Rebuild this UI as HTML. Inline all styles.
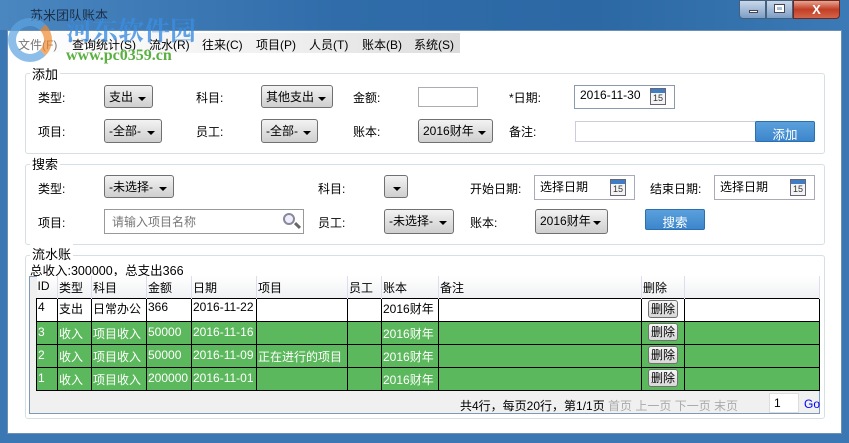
<!DOCTYPE html>
<html><head><meta charset="utf-8"><style>
*{margin:0;padding:0;box-sizing:border-box}
body{width:849px;height:443px;overflow:hidden;font-family:"Liberation Sans","Noto Sans CJK SC",sans-serif;font-size:12px;color:#000;position:relative;background:#3a77b3}
.a{position:absolute;white-space:nowrap}
.title{left:0;top:0;width:849px;height:30px;background:linear-gradient(90deg,#4a86c0,#2f6ca9 40%,#2b68a4 70%,#3b7ab6)}
.client{left:7px;top:30px;width:835px;height:404px;background:#fff;border:1px solid #6b8fb5}
.menu{left:8px;top:33px;width:452px;height:20px;background:linear-gradient(90deg,#fff,#f0f0f0 60%,#dcdcdc)}
.menu span{position:absolute;top:3px;font-size:12px}
.gb{border:1px solid #d5dfe5;border-radius:3px}
.gl{background:#fff;padding:0 2px;font-size:13px}
.dd{border:1px solid #707070;border-radius:3px;background:linear-gradient(#f3f3f3,#e0e0e0 50%,#cfcfcf);padding:2px 0 0 4px;font-size:12px}
.dd:after{content:"";position:absolute;right:6px;top:11px;border:4px solid transparent;border-top:4px solid #000;border-bottom:0}
.in{border:1px solid #abadb3;background:#fff}
.btn{background:linear-gradient(#5aa0dc,#3d86cc);border:1px solid #2c6fb0;border-radius:2px;color:#fff;text-align:center;font-size:12.5px;padding-top:2px}
.cal{position:absolute;width:16px;height:17px;border:1px solid #667;background:#f4f4f4;font-size:9px;text-align:center;line-height:11px;padding-top:4px;color:#333}
.cal:before{content:"";position:absolute;left:0;top:0;width:14px;height:4px;background:#3f7cc4}
table{border-collapse:collapse;position:absolute;left:36px;top:276px;font-size:12px;table-layout:fixed;width:783px}
td{height:22px;border:1px solid #000;padding:0 1px;vertical-align:top;padding-top:1px;white-space:nowrap;overflow:hidden}
tr.h td{background:linear-gradient(#fff,#f0f1f3);border:none;border-right:1px solid #dde;padding-top:3px}
tr.w td{height:23px}
tr.g td{background:#5cb85c;color:#fff;height:23px;padding-top:3px}
.del{display:inline-block;border:1px solid #707070;border-radius:3px;background:linear-gradient(#f6f6f6,#d8d8d8);color:#000;padding:0 2px;font-size:12px;line-height:16px}
</style></head><body>
<div class="a title"></div>
<div class="a" style="left:30px;top:5px;font-size:13px;color:#1b2f48">苏米团队账本</div>
<div class="a" style="left:739px;top:0;width:27px;height:19px;background:linear-gradient(#c9d8ea,#7e9dc4);border:1px solid #44607f;border-radius:0 0 0 4px"></div>
<div class="a" style="left:749px;top:10px;width:9px;height:3px;background:#fff;border:1px solid #445"></div>
<div class="a" style="left:766px;top:0;width:27px;height:19px;background:linear-gradient(#c9d8ea,#7e9dc4);border:1px solid #44607f"></div>
<div class="a" style="left:775px;top:5px;width:9px;height:7px;border:2px solid #fff;outline:1px solid #445"></div>
<div class="a" style="left:793px;top:0;width:47px;height:19px;background:linear-gradient(#e8a593,#c23e25 50%,#d3654a);border:1px solid #6b2a20;border-radius:0 0 4px 0;color:#fff;font-weight:bold;text-align:center;font-size:13px;line-height:17px">X</div>
<div class="a client"></div>
<div class="a menu"><span style="left:10px;color:#777">文件(F)</span><span style="left:64px">查询统计(S)</span><span style="left:141px">流水(R)</span><span style="left:194px">往来(C)</span><span style="left:248px">项目(P)</span><span style="left:301px">人员(T)</span><span style="left:354px">账本(B)</span><span style="left:406px">系统(S)</span></div>
<div class="a" style="left:66px;top:11px;font-size:26px;font-weight:bold;color:#3b8de0;opacity:.8;font-family:'Noto Serif CJK SC',serif">河东软件园</div>
<div class="a" style="left:66px;top:47px;font-size:16px;font-weight:bold;color:#5ab040;font-family:'Liberation Serif',serif">www.pc0359.cn</div>
<div class="a" style="left:8px;top:18px;width:44px;height:44px;border-radius:50%;border:8px solid #5da3e0;border-right-color:#f08a30;opacity:.7"></div>

<div class="a gb" style="left:25px;top:73px;width:800px;height:81px"></div>
<div class="a gl" style="left:30px;top:64px">添加</div>
<div class="a" style="left:38px;top:89px">类型:</div>
<div class="a dd" style="left:104px;top:85px;width:49px;height:23px">支出</div>
<div class="a" style="left:196px;top:89px">科目:</div>
<div class="a dd" style="left:261px;top:85px;width:72px;height:23px">其他支出</div>
<div class="a" style="left:353px;top:89px">金额:</div>
<div class="a in" style="left:418px;top:87px;width:60px;height:20px"></div>
<div class="a" style="left:509px;top:89px">*日期:</div>
<div class="a in" style="left:574px;top:85px;width:101px;height:24px;border-color:#8a9aaa;padding:2px 5px">2016-11-30</div>
<div class="cal" style="left:650px;top:88px">15</div>
<div class="a" style="left:38px;top:123px">项目:</div>
<div class="a dd" style="left:104px;top:119px;width:58px;height:24px">-全部-</div>
<div class="a" style="left:196px;top:123px">员工:</div>
<div class="a dd" style="left:261px;top:119px;width:57px;height:24px">-全部-</div>
<div class="a" style="left:353px;top:123px">账本:</div>
<div class="a dd" style="left:418px;top:119px;width:75px;height:24px">2016财年</div>
<div class="a" style="left:509px;top:123px">备注:</div>
<div class="a in" style="left:575px;top:121px;width:181px;height:21px;border-color:#ccd"></div>
<div class="a btn" style="left:755px;top:121px;width:60px;height:21px">添加</div>

<div class="a gb" style="left:25px;top:164px;width:800px;height:81px"></div>
<div class="a gl" style="left:30px;top:154px">搜索</div>
<div class="a" style="left:38px;top:180px">类型:</div>
<div class="a dd" style="left:104px;top:175px;width:70px;height:23px">-未选择-</div>
<div class="a" style="left:318px;top:180px">科目:</div>
<div class="a dd" style="left:384px;top:175px;width:24px;height:23px"></div>
<div class="a" style="left:470px;top:180px">开始日期:</div>
<div class="a in" style="left:534px;top:175px;width:101px;height:25px;border-color:#aab;padding:2px 5px">选择日期</div>
<div class="cal" style="left:610px;top:179px">15</div>
<div class="a" style="left:650px;top:180px">结束日期:</div>
<div class="a in" style="left:714px;top:175px;width:101px;height:25px;border-color:#aab;padding:2px 5px">选择日期</div>
<div class="cal" style="left:790px;top:179px">15</div>
<div class="a" style="left:38px;top:214px">项目:</div>
<div class="a in" style="left:104px;top:209px;width:200px;height:25px;border-color:#999;color:#777;padding:3px 7px">请输入项目名称</div>
<div class="a" style="left:283px;top:213px;width:12px;height:12px;border:2px solid #889;border-radius:50%;background:#eef"></div>
<div class="a" style="left:294px;top:224px;width:7px;height:3px;background:#666;transform:rotate(45deg)"></div>
<div class="a" style="left:318px;top:214px">员工:</div>
<div class="a dd" style="left:384px;top:209px;width:70px;height:25px">-未选择-</div>
<div class="a" style="left:470px;top:214px">账本:</div>
<div class="a dd" style="left:535px;top:209px;width:73px;height:25px">2016财年</div>
<div class="a btn" style="left:645px;top:209px;width:60px;height:21px">搜索</div>

<div class="a gb" style="left:25px;top:255px;width:800px;height:164px"></div>
<div class="a gl" style="left:30px;top:244px">流水账</div>
<div class="a" style="left:30px;top:260px;font-size:12.5px">总收入:300000，总支出366</div>
<div class="a" style="left:29px;top:276px;width:791px;height:138px;background:#f0f0f0;border:1px solid #7e99b8"></div>
<table>
<colgroup><col style="width:21px"><col style="width:34px"><col style="width:55px"><col style="width:45px"><col style="width:65px"><col style="width:91px"><col style="width:34px"><col style="width:57px"><col style="width:203px"><col style="width:43px"><col style="width:135px"></colgroup>
<tr class="h"><td>ID</td><td>类型</td><td>科目</td><td>金额</td><td>日期</td><td>项目</td><td>员工</td><td>账本</td><td>备注</td><td>删除</td><td></td></tr>
<tr class="w" style="background:#fff"><td>4</td><td>支出</td><td>日常办公</td><td>366</td><td>2016-11-22</td><td></td><td></td><td>2016财年</td><td></td><td style="text-align:center"><span class="del">删除</span></td><td></td></tr>
<tr class="g"><td>3</td><td>收入</td><td>项目收入</td><td>50000</td><td>2016-11-16</td><td></td><td></td><td>2016财年</td><td></td><td style="text-align:center;padding-top:1px"><span class="del">删除</span></td><td></td></tr>
<tr class="g"><td>2</td><td>收入</td><td>项目收入</td><td>50000</td><td>2016-11-09</td><td>正在进行的项目</td><td></td><td>2016财年</td><td></td><td style="text-align:center;padding-top:1px"><span class="del">删除</span></td><td></td></tr>
<tr class="g"><td>1</td><td>收入</td><td>项目收入</td><td>200000</td><td>2016-11-01</td><td></td><td></td><td>2016财年</td><td></td><td style="text-align:center;padding-top:1px"><span class="del">删除</span></td><td></td></tr>
</table>
<div class="a" style="left:460px;top:397px">共4行，每页20行，第1/1页 <span style="color:#aaa">首页 上一页 下一页 末页</span></div>
<div class="a in" style="left:769px;top:393px;width:30px;height:20px;border-color:#ddd;padding:2px 4px">1</div>
<div class="a" style="left:804px;top:397px;color:#00f">Go</div>
</body></html>
